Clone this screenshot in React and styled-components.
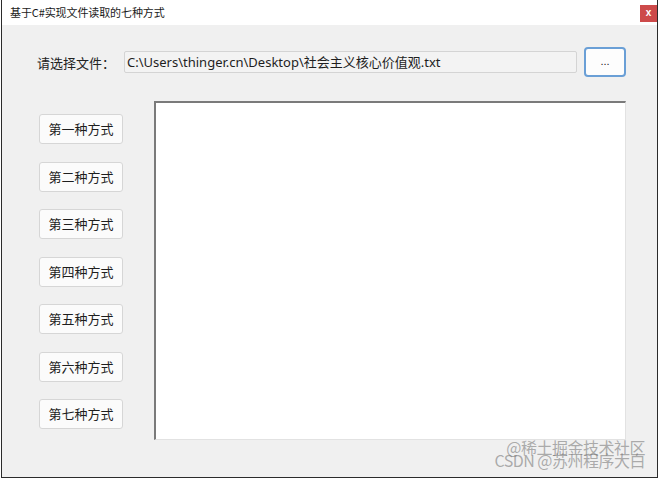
import React from "react";
import styled, { createGlobalStyle } from "styled-components";

const Global = createGlobalStyle`
  html, body { margin: 0; padding: 0; background: #ffffff; }
  body { width: 661px; height: 481px; overflow: hidden; font-family: "Noto Sans", "Noto Sans CJK SC", sans-serif; }
`;

const Window = styled.div`
  position: relative;
  margin-left: 1px;
  width: 655px;
  height: 477px;
  border-left: 1px solid #2b2b2b;
  border-right: 1px solid #2b2b2b;
  border-bottom: 1px solid #2b2b2b;
  display: flex;
  flex-direction: column;
  background: #f0f0f0;
`;

const TitleBar = styled.div`
  height: 25px;
  flex: none;
  background: #ffffff;
  display: flex;
  justify-content: space-between;
  align-items: flex-start;
  padding-left: 8px;
`;

const Title = styled.div`
  font-family: "Noto Sans CJK SC", sans-serif;
  font-size: 11px;
  line-height: 25px;
  color: #1a1a1a;
  letter-spacing: -0.1px;
`;

const CloseBtn = styled.div`
  margin-top: 5px;
  width: 17px;
  height: 17px;
  background: #cd4a4a;
  color: #ffffff;
  font-family: "Liberation Sans", sans-serif;
  font-size: 10px;
  font-weight: bold;
  line-height: 16px;
  text-align: center;
`;

const Body = styled.div`
  flex: 1;
  padding: 22px 31px 37px 35px;
  display: flex;
  flex-direction: column;
  gap: 24px;
`;

const FileRow = styled.div`
  display: flex;
  align-items: center;
  height: 30px;
`;

const Label = styled.div`
  width: 87px;
  flex: none;
  font-family: "Noto Sans CJK SC", sans-serif;
  font-size: 13px;
  color: #222;
`;

const PathBox = styled.div`
  width: 451px;
  height: 20px;
  border: 1px solid #d4d4d4;
  border-radius: 2px;
  background: #f3f3f3;
  font-family: "Noto Sans", "Noto Sans CJK SC", sans-serif;
  font-size: 13px;
  line-height: 20px;
  padding-left: 2px;
  box-sizing: content-box;
  color: #1e1e1e;
  white-space: nowrap;
  overflow: hidden;
`;

const BrowseBtn = styled.div`
  margin-left: 7px;
  width: 38px;
  height: 26px;
  border: 2px solid #6a9fd6;
  border-radius: 4px;
  background: #fdfdfd;
  font-family: "Liberation Sans", sans-serif;
  font-size: 11px;
  line-height: 24px;
  text-align: center;
  color: #222;
`;

const Main = styled.div`
  flex: 1;
  display: flex;
  gap: 31px;
`;

const ButtonColumn = styled.div`
  margin-left: 2px;
  padding-top: 13px;
  display: flex;
  flex-direction: column;
  gap: 17.5px;
`;

const WayButton = styled.div`
  width: 82px;
  height: 28px;
  border: 1px solid #d6d6d6;
  border-radius: 3px;
  background: #fbfbfb;
  font-family: "Noto Sans CJK SC", sans-serif;
  font-size: 13px;
  line-height: 28px;
  text-align: center;
  color: #1e1e1e;
`;

const TextArea = styled.div`
  flex: 1;
  background: #ffffff;
  border-top: 2px solid #7a7a7a;
  border-left: 2px solid #7a7a7a;
  border-right: 1px solid #e2e2e2;
  border-bottom: 1px solid #e2e2e2;
`;

const Watermark = styled.div`
  position: absolute;
  right: ${(p) => p.$right}px;
  bottom: ${(p) => p.$bottom}px;
  font-family: "Noto Sans CJK SC", sans-serif;
  font-size: 16px;
  color: rgba(110, 110, 110, 0.55);
  white-space: nowrap;
  letter-spacing: -0.5px;
`;

const ways = ["第一种方式", "第二种方式", "第三种方式", "第四种方式", "第五种方式", "第六种方式", "第七种方式"];

export default function App() {
  return (
    <>
      <Global />
      <Window>
        <TitleBar>
          <Title>基于C#实现文件读取的七种方式</Title>
          <CloseBtn>x</CloseBtn>
        </TitleBar>
        <Body>
          <FileRow>
            <Label>请选择文件：</Label>
            <PathBox>C:\Users\thinger.cn\Desktop\社会主义核心价值观.txt</PathBox>
            <BrowseBtn>...</BrowseBtn>
          </FileRow>
          <Main>
            <ButtonColumn>
              {ways.map((w) => (
                <WayButton key={w}>{w}</WayButton>
              ))}
            </ButtonColumn>
            <TextArea />
          </Main>
        </Body>
        <Watermark $right={12} $bottom={18}>@稀土掘金技术社区</Watermark>
        <Watermark $right={12} $bottom={5}>CSDN @苏州程序大白</Watermark>
      </Window>
    </>
  );
}
